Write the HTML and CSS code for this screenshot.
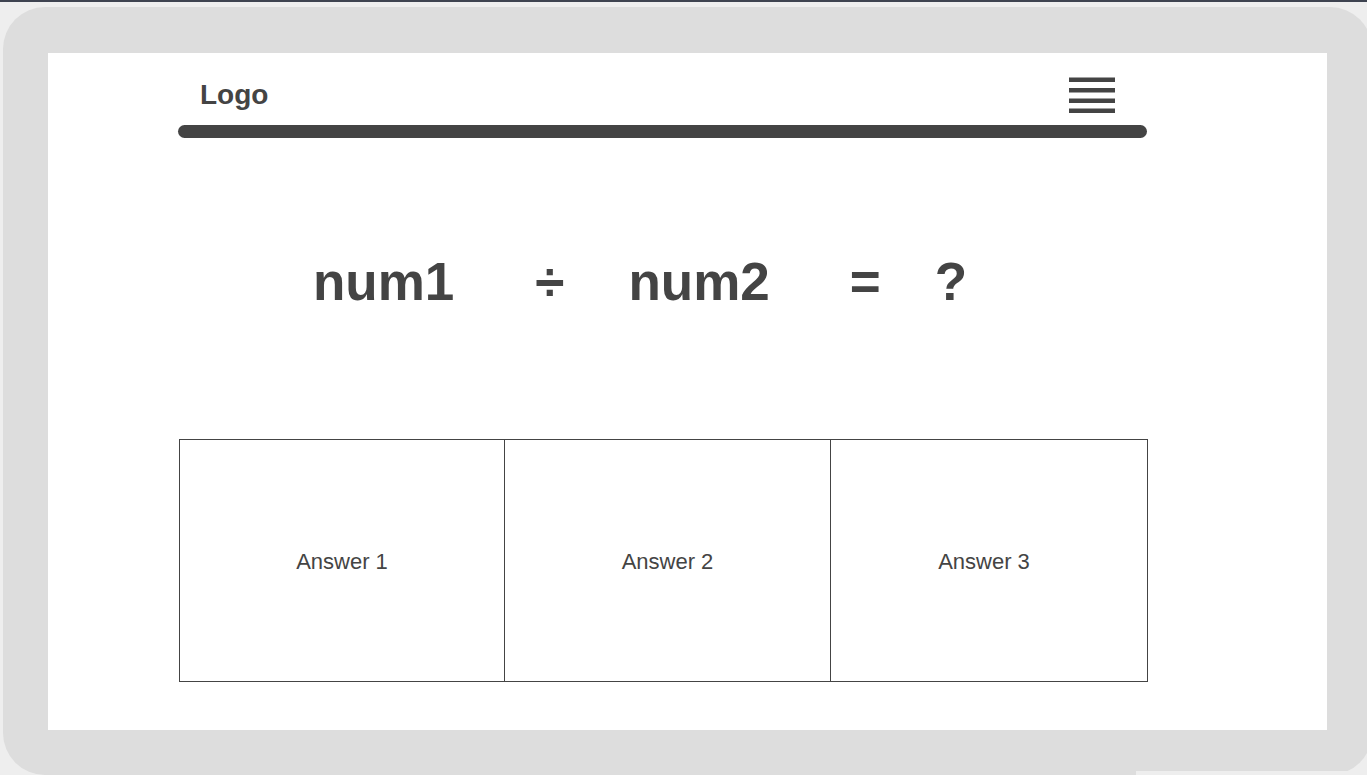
FILE: index.html
```html
<!DOCTYPE html>
<html>
<head>
<meta charset="utf-8">
<link rel="stylesheet" href="styles.css">
</head>
<body>
<div class="topline"></div>
<div class="frame">
  <div class="panel">
    <div class="content">
      <header class="header">
        <div class="logo">Logo</div>
        <svg class="menu" width="46" height="36" viewBox="0 0 46 36">
          <rect x="0" y="0.5" width="46" height="4.5" fill="#444"/>
          <rect x="0" y="11" width="46" height="4.5" fill="#444"/>
          <rect x="0" y="21.5" width="46" height="4.5" fill="#444"/>
          <rect x="0" y="31.5" width="46" height="4.5" fill="#444"/>
        </svg>
      </header>
      <div class="bar"></div>
      <div class="equation">
        <span class="term">num1</span>
        <span class="op op-div">÷</span>
        <span class="term term-2">num2</span>
        <span class="op op-eq">=</span>
        <span class="op op-q">?</span>
      </div>
      <div class="answers">
        <div class="answer">Answer 1</div>
        <div class="answer">Answer 2</div>
        <div class="answer answer-last">Answer 3</div>
      </div>
    </div>
  </div>
</div>
<div class="corner-strip"></div>
</body>
</html>
```
FILE: styles.css
```css
html, body {
  margin: 0;
  padding: 0;
  height: 775px;
  overflow: hidden;
}
body {
  background: #eeeeee;
  font-family: "Liberation Sans", Arial, sans-serif;
  color: #444444;
  position: relative;
}
.topline {
  height: 2px;
  background: #3e4350;
  margin-bottom: 5px;
}
.frame {
  margin-left: 3px;
  width: 1279px;
  height: 677px;
  padding: 46px 45px 45px 45px;
  background: #dddddd;
  border-radius: 42px;
}
.panel {
  background: #ffffff;
  width: 1279px;
  height: 677px;
}
.content {
  padding-left: 130px;
  width: 970px;
}
.header {
  display: flex;
  justify-content: space-between;
  align-items: flex-start;
  padding-top: 24px;
  height: 36px;
  margin-bottom: 12px;
}
.logo {
  font-size: 28px;
  font-weight: bold;
  line-height: 28px;
  margin-top: 4px;
  margin-left: 22px;
}
.menu {
  display: block;
  margin-right: 33px;
}
.bar {
  height: 13px;
  width: 969px;
  background: #444444;
  border-radius: 7px;
}
.equation {
  display: flex;
  margin-top: 114px;
  padding-left: 135px;
  font-size: 53px;
  font-weight: bold;
  line-height: 60px;
  height: 60px;
  white-space: pre;
}
.op-div { margin-left: 81px; }
.term-2 { margin-left: 64px; }
.op-eq { margin-left: 80px; }
.op-q { margin-left: 54px; }
.answers {
  margin-top: 127px;
  margin-left: 1px;
  width: 967px;
  height: 241px;
  border: 1px solid #444444;
  display: grid;
  grid-template-columns: 324px 326px 317px;
}
.answer {
  display: flex;
  align-items: center;
  justify-content: center;
  font-size: 22px;
  padding-top: 3px;
}
.answer + .answer {
  border-left: 1px solid #444444;
}
.answer-last {
  padding-right: 10px;
}
.corner-strip {
  position: absolute;
  left: 1136px;
  top: 771px;
  width: 231px;
  height: 4px;
  background: #eeeeee;
}
```
